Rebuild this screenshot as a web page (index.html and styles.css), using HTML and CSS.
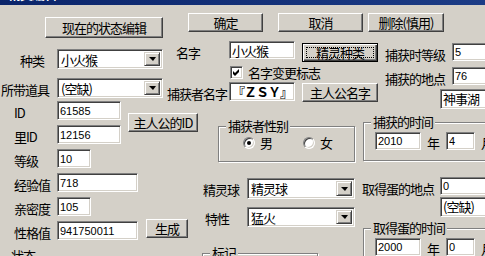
FILE: index.html
```html
<!DOCTYPE html>
<html lang="zh-CN">
<head>
  <meta charset="UTF-8" />
  <title>精灵编辑</title>
  <link rel="stylesheet" href="styles.css">
</head>
<body>
  <div class="titlebar"><span class="title-text">精灵编辑 Ver</span></div>

  <div class="dialog">
    <div class="col-left">
      <button class="btn btn-edit">现在的状态编辑</button>

      <div class="row row-kind">
        <span class="label lbl-kind">种类</span>
        <div class="combo w-106"><span class="combo-text">小火猴</span><span class="drop"></span></div>
      </div>
      <div class="row row-item">
        <span class="label lbl-item">所带道具</span>
        <div class="combo w-106"><span class="combo-text">(空缺)</span><span class="drop"></span></div>
      </div>

      <div class="id-block">
        <div class="id-rows">
          <div class="row"><span class="label">ID</span><input class="field w-64" value="61585"></div>
          <div class="row row-gap"><span class="label">里ID</span><input class="field w-64" value="12156"></div>
        </div>
        <button class="btn btn-owner-id">主人公的ID</button>
      </div>

      <div class="row row-gap"><span class="label">等级</span><input class="field w-34" value="10"></div>
      <div class="row row-gap"><span class="label">经验值</span><input class="field w-81" value="718"></div>
      <div class="row row-gap"><span class="label">亲密度</span><input class="field w-34" value="105"></div>
      <div class="row row-gap">
        <span class="label">性格值</span><input class="field w-81" value="941750011">
        <button class="btn btn-gen">生成</button>
      </div>
      <div class="label lbl-status">状态</div>
    </div>

    <div class="col-main">
      <div class="top-buttons">
        <button class="btn btn-ok">确定</button>
        <button class="btn btn-cancel">取消</button>
        <button class="btn btn-delete">删除(慎用)</button>
      </div>

      <div class="main-body">
        <div class="col-mid">
          <div class="mrow row-name">
            <span class="label lbl-name">名字</span>
            <input class="field cjk w-66" value="小火猴">
            <button class="btn btn-default btn-species"><span class="focus-ring">精灵种类</span></button>
          </div>
          <div class="check-row">
            <span class="check">
              <svg width="7" height="7" viewBox="0 0 7 7"><path d="M0 2 L2 4 L6 0 L6 3 L2 7 L0 5 Z" fill="#000"/></svg>
            </span>
            <span class="check-text">名字变更标志</span>
          </div>
          <div class="mrow row-catcher">
            <span class="label lbl-catcher">捕获者名字</span>
            <input class="field cjk w-66 zsy" value="『ＺＳＹ』">
            <button class="btn btn-owner-name">主人公名字</button>
          </div>

          <div class="group group-gender">
            <div class="group-title">捕获者性别</div>
            <div class="radio-row">
              <span class="radio on"></span><span class="radio-text">男</span>
              <span class="radio radio-f"></span><span class="radio-text">女</span>
            </div>
          </div>

          <div class="mrow row-ball">
            <span class="label lbl-ball">精灵球</span>
            <div class="combo w-108 h-21"><span class="combo-text">精灵球</span><span class="drop"></span></div>
          </div>
          <div class="mrow row-ability">
            <span class="label lbl-ability">特性</span>
            <div class="combo w-108"><span class="combo-text">猛火</span><span class="drop"></span></div>
          </div>

          <div class="group group-mark">
            <div class="group-title">标记</div>
          </div>
        </div>

        <div class="col-right">
          <div class="rrow row-lvl">
            <span class="label lbl-r">捕获时等级</span>
            <input class="field w-60" value="5">
          </div>
          <div class="rrow row-place">
            <span class="label lbl-r">捕获的地点</span>
            <input class="field w-60" value="76">
          </div>
          <div class="field box box-lake">神事湖</div>

          <div class="group group-time">
            <div class="group-title">捕获的时间</div>
            <div class="date-row">
              <input class="field w-46" value="2010">
              <span class="unit">年</span>
              <input class="field w-29 month" value="4">
              <span class="unit unit-m">月</span>
            </div>
          </div>

          <div class="rrow row-egg">
            <span class="label lbl-egg">取得蛋的地点</span>
            <input class="field w-60" value="0">
          </div>
          <div class="field box box-empty">(空缺)</div>

          <div class="group group-egg">
            <div class="group-title">取得蛋的时间</div>
            <div class="date-row">
              <input class="field w-46" value="2000">
              <span class="unit">年</span>
              <input class="field w-29 month" value="0">
              <span class="unit unit-m">月</span>
            </div>
          </div>
        </div>
      </div>
    </div>
  </div>
</body>
</html>
```

FILE: styles.css
```css
* {
  box-sizing: border-box;
  margin: 0;
  padding: 0;
}

body {
  width: 485px;
  height: 256px;
  overflow: hidden;
  background-color: #d4d0c8;
  color: #000;
  font-family: "Noto Sans CJK SC", sans-serif;
  font-size: 13px;
  letter-spacing: -1px;
}

/* window title, only its lower edge is on screen */
.titlebar {
  height: 5px;
  overflow: hidden;
  background: linear-gradient(to right, #0a246a, #1c3c86);
}

.title-text {
  display: block;
  margin: -14px 0 0 8px;
  color: #fff;
  font-weight: bold;
  line-height: 16px;
}

.dialog {
  display: flex;
  height: 251px;
}

/* shared controls */
.label {
  flex-shrink: 0;
  white-space: nowrap;
  line-height: 19px;
}

.field {
  flex-shrink: 0;
  height: 19px;
  background-color: #fff;
  border: 1px solid;
  border-color: #808080 #fff #fff #808080;
  box-shadow: inset 1px 1px 0 #404040, inset -1px -1px 0 #d4d0c8;
  padding: 0 2px;
  font-family: "Liberation Sans", "Noto Sans CJK SC", sans-serif;
  font-size: 11px;
  letter-spacing: 0;
  color: #000;
  outline: none;
}

.field.cjk {
  font-family: "Noto Sans CJK SC", sans-serif;
  font-size: 13px;
  letter-spacing: -1px;
}

.btn {
  flex-shrink: 0;
  height: 19px;
  background-color: #d4d0c8;
  border: 1px solid;
  border-color: #fff #404040 #404040 #fff;
  box-shadow: inset -1px -1px 0 #808080;
  font-family: inherit;
  font-size: 13px;
  letter-spacing: -1px;
  color: #000;
  line-height: 15px;
}

.btn-default {
  display: flex;
  padding: 3px;
  border: 1px solid #000;
  box-shadow: inset 1px 1px 0 #fff, inset -1px -1px 0 #404040, inset -2px -2px 0 #808080;
}

.focus-ring {
  flex: 1;
  display: flex;
  align-items: center;
  justify-content: center;
  border: 1px dotted #000;
}

.combo {
  flex-shrink: 0;
  display: flex;
  height: 20px;
  padding: 2px;
  background-color: #fff;
  border: 1px solid;
  border-color: #808080 #fff #fff #808080;
  box-shadow: inset 1px 1px 0 #404040, inset -1px -1px 0 #d4d0c8;
}

.combo.h-21 {
  height: 21px;
}

.combo-text {
  flex: 1;
  padding-left: 1px;
  line-height: 15px;
  white-space: nowrap;
}

.drop {
  width: 16px;
  display: flex;
  align-items: center;
  justify-content: center;
  background-color: #d4d0c8;
  border: 1px solid;
  border-color: #d4d0c8 #404040 #404040 #d4d0c8;
  box-shadow: inset 1px 1px 0 #fff, inset -1px -1px 0 #808080;
}

.drop::before {
  content: "";
  border-left: 4px solid transparent;
  border-right: 3px solid transparent;
  border-top: 4px solid #000;
}

.group {
  flex-shrink: 0;
  border: 1px solid #808080;
  box-shadow: inset 1px 1px 0 #fff, 1px 1px 0 #fff;
}

.group-title {
  width: fit-content;
  margin: -9px 0 0 7px;
  padding: 0 2px 0 2px;
  background-color: #d4d0c8;
  line-height: 16px;
}

.w-29 { width: 29px; }
.w-34 { width: 34px; }
.w-46 { width: 46px; }
.w-60 { width: 60px; }
.w-64 { width: 64px; }
.w-66 { width: 66px; }
.w-81 { width: 81px; }
.w-106 { width: 106px; }
.w-108 { width: 108px; }

/* left column */
.col-left {
  width: 167px;
  flex-shrink: 0;
  display: flex;
  flex-direction: column;
}

.btn-edit {
  width: 118px;
  height: 21px;
  margin: 12px 0 0 45px;
}

.row {
  display: flex;
  align-items: flex-start;
  height: 19px;
}

.col-left .label {
  width: 57px;
  padding: 2px 0 0 14px;
}

.row-kind {
  height: 20px;
  margin-top: 11px;
}

.row-item {
  height: 20px;
  margin-top: 9px;
}

.col-left .lbl-kind {
  padding-left: 20px;
}

.col-left .lbl-item {
  padding-left: 1px;
}

.row-gap {
  margin-top: 5px;
}

.id-block {
  display: flex;
  align-items: center;
  margin-top: 3px;
}

.id-rows {
  width: 121px;
  flex-shrink: 0;
}

.btn-owner-id {
  width: 70px;
  margin-left: 7px;
}

.btn-gen {
  width: 42px;
  margin: -2px 0 0 8px;
}

.col-left .lbl-status {
  margin-top: 4px;
  padding-left: 11px;
}

/* middle and right */
.col-main {
  flex: 1;
  display: flex;
  flex-direction: column;
}

.top-buttons {
  display: flex;
  height: 19px;
  margin-top: 8px;
}

.btn-ok {
  width: 75px;
  margin-left: 21px;
}

.btn-cancel {
  width: 85px;
  margin-left: 15px;
}

.btn-delete {
  width: 76px;
  margin-left: 5px;
}

.main-body {
  display: flex;
}

.col-mid {
  width: 195px;
  flex-shrink: 0;
  display: flex;
  flex-direction: column;
}

.mrow {
  display: flex;
  align-items: flex-start;
  height: 20px;
}

.mrow .label {
  width: 62px;
  padding-top: 2px;
}

.row-name {
  margin-top: 9px;
}

.row-name .field {
  height: 18px;
}

.lbl-name {
  padding-left: 9px;
}

.btn-species {
  width: 76px;
  margin: 2px 0 0 7px;
}

.check-row {
  display: flex;
  align-items: center;
  height: 13px;
  margin: 5px 0 0 63px;
}

.check {
  width: 13px;
  height: 13px;
  display: flex;
  align-items: center;
  justify-content: center;
  background-color: #fff;
  border: 1px solid;
  border-color: #808080 #fff #fff #808080;
  box-shadow: inset 1px 1px 0 #404040, inset -1px -1px 0 #d4d0c8;
}

.check-text {
  margin-left: 5px;
  white-space: nowrap;
  line-height: 16px;
}

.row-catcher {
  margin-top: 3px;
}

.zsy {
  font-weight: bold;
}

.btn-owner-name {
  width: 76px;
  margin: 1px 0 0 7px;
}

.group-gender {
  width: 137px;
  height: 36px;
  margin: 24px 0 0 51px;
}

.radio-row {
  display: flex;
  align-items: center;
  height: 16px;
  margin-top: 1px;
  padding-left: 24px;
}

.radio {
  width: 12px;
  height: 12px;
  display: flex;
  align-items: center;
  justify-content: center;
  border-radius: 50%;
  background-color: #fff;
  border: 1px solid;
  border-color: #808080 #fff #fff #808080;
  box-shadow: inset 1px 1px 0 #404040, inset -1px -1px 0 #d4d0c8;
}

.radio.on::after {
  content: "";
  width: 4px;
  height: 4px;
  border-radius: 50%;
  background-color: #000;
}

.radio-text {
  margin-left: 5px;
  line-height: 16px;
}

.radio-f {
  margin-left: 31px;
}

.row-ball {
  height: 21px;
  margin-top: 16px;
}

.mrow .lbl-ball {
  width: 80px;
  padding-left: 36px;
}

.row-ability {
  margin-top: 8px;
}

.mrow .lbl-ability {
  width: 80px;
  padding-left: 38px;
}

.group-mark {
  width: 116px;
  height: 40px;
  margin: 26px 0 0 35px;
}

.col-right {
  flex: 1;
  display: flex;
  flex-direction: column;
}

.rrow {
  display: flex;
  align-items: flex-start;
  height: 18px;
}

.rrow .field {
  height: 18px;
}

.rrow .label {
  line-height: 18px;
  padding-top: 3px;
}

.lbl-r {
  width: 90px;
  padding-left: 23px;
}

.row-lvl {
  margin-top: 11px;
}

.row-place {
  margin-top: 6px;
}

.box {
  width: 60px;
  height: 20px;
  margin-left: 78px;
  font-family: "Noto Sans CJK SC", sans-serif;
  font-size: 13px;
  letter-spacing: -1px;
  line-height: 17px;
  white-space: nowrap;
}

.box-lake {
  margin-top: 4px;
}

.group-time {
  width: 140px;
  height: 39px;
  margin: 13px 0 0 1px;
}

.date-row {
  display: flex;
  align-items: center;
  height: 18px;
  margin-top: 2px;
  padding-left: 11px;
}

.date-row .field {
  height: 18px;
}

.unit {
  width: 12px;
  margin-left: 6px;
  padding-top: 3px;
  line-height: 16px;
}

.month {
  margin-left: 7px;
}

.unit-m {
  margin-left: 6px;
}

.row-egg {
  margin-top: 16px;
}

.lbl-egg {
  width: 78px;
}

.box-empty {
  margin-top: 2px;
}

.group-egg {
  height: 40px;
  width: 140px;
  margin: 11px 0 0 1px;
}
```
